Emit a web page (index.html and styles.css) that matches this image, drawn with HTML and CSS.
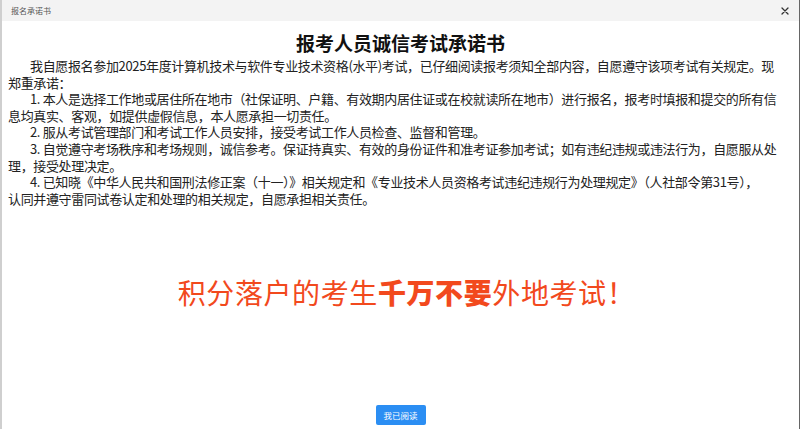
FILE: index.html
```html
<!DOCTYPE html>
<html lang="zh-CN">
<head>
<meta charset="utf-8">
<title>报名承诺书</title>
<link rel="stylesheet" href="styles.css">
</head>
<body>
<div class="dialog">
  <div class="header">
    <span class="header-title">报名承诺书</span>
    <span class="close" aria-label="关闭">
      <svg width="8" height="8" viewBox="0 0 8 8"><path d="M1 1L7 7M7 1L1 7" stroke="#333" stroke-width="1.3" stroke-linecap="round"/></svg>
    </span>
  </div>
  <div class="content">
    <h1 class="title">报考人员诚信考试承诺书</h1>
    <div class="text">
      <p class="para">我自愿报名参加2025年度计算机技术与软件专业技术资格(水平)考试，已仔细阅读报考须知全部内容，自愿遵守该项考试有关规定。现郑重承诺：</p>
      <p class="para">1. 本人是选择工作地或居住所在地市（社保证明、户籍、有效期内居住证或在校就读所在地市）进行报名，报考时填报和提交的所有信息均真实、客观，如提供虚假信息，本人愿承担一切责任。</p>
      <p class="para">2. 服从考试管理部门和考试工作人员安排，接受考试工作人员检查、监督和管理。</p>
      <p class="para">3. 自觉遵守考场秩序和考场规则，诚信参考。保证持真实、有效的身份证件和准考证参加考试；如有违纪违规或违法行为，自愿服从处理，接受处理决定。</p>
      <p class="para">4. 已知晓《中华人民共和国刑法修正案（十一）》相关规定和《专业技术人员资格考试违纪违规行为处理规定》（人社部令第31号），<br>认同并遵守雷同试卷认定和处理的相关规定，自愿承担相关责任。</p>
    </div>
    <p class="warning">积分落户的考生<strong class="strong">千万不要</strong>外地考试！</p>
  </div>
  <div class="footer">
    <button class="btn" type="button">我已阅读</button>
  </div>
</div>
</body>
</html>
```

FILE: styles.css
```css
* { box-sizing: border-box; }
html, body {
  margin: 0;
  padding: 0;
  background: #fff;
}
body {
  font-family: "Noto Sans CJK SC", "Microsoft YaHei", "Noto Sans", sans-serif;
  color: #222;
}
.dialog {
  width: 800px;
  height: 429px;
  display: flex;
  flex-direction: column;
  border-left: 2px solid #cfcfcf;
  border-right: 1px solid #666;
  background: #fff;
}
.header {
  height: 21px;
  flex: none;
  display: flex;
  align-items: center;
  justify-content: space-between;
  padding: 0 10px 0 9px;
  background: #f3f3f3;
}
.header-title {
  font-size: 8px;
  color: #555;
  line-height: 1;
}
.close {
  display: flex;
  align-items: center;
}
.content {
  flex: 1;
  padding: 0 18px 0 6px;
}
.title {
  margin: 10px 0 0;
  padding-left: 12px;
  font-size: 19px;
  line-height: 24px;
  font-weight: 700;
  text-align: center;
  color: #111;
}
.text {
  margin-top: 3px;
}
.para {
  margin: 0;
  font-size: 13px;
  letter-spacing: -0.35px;
  line-height: 16.6px;
  text-indent: 22px;
  color: #222;
}
.warning {
  margin: 67px 0 0;
  padding-left: 24px;
  text-align: center;
  font-size: 28px;
  line-height: 36px;
  color: #f2491d;
  letter-spacing: 0.6px;
}
.strong {
  font-weight: 900;
}
.footer {
  flex: none;
  display: flex;
  justify-content: center;
  padding: 0 0 4px;
}
.btn {
  width: 50px;
  height: 20px;
  border: none;
  border-radius: 2px;
  background: #2b8ef3;
  color: #fff;
  font-family: "Noto Sans CJK SC", sans-serif;
  font-size: 8.5px;
  padding: 0;
}
```
